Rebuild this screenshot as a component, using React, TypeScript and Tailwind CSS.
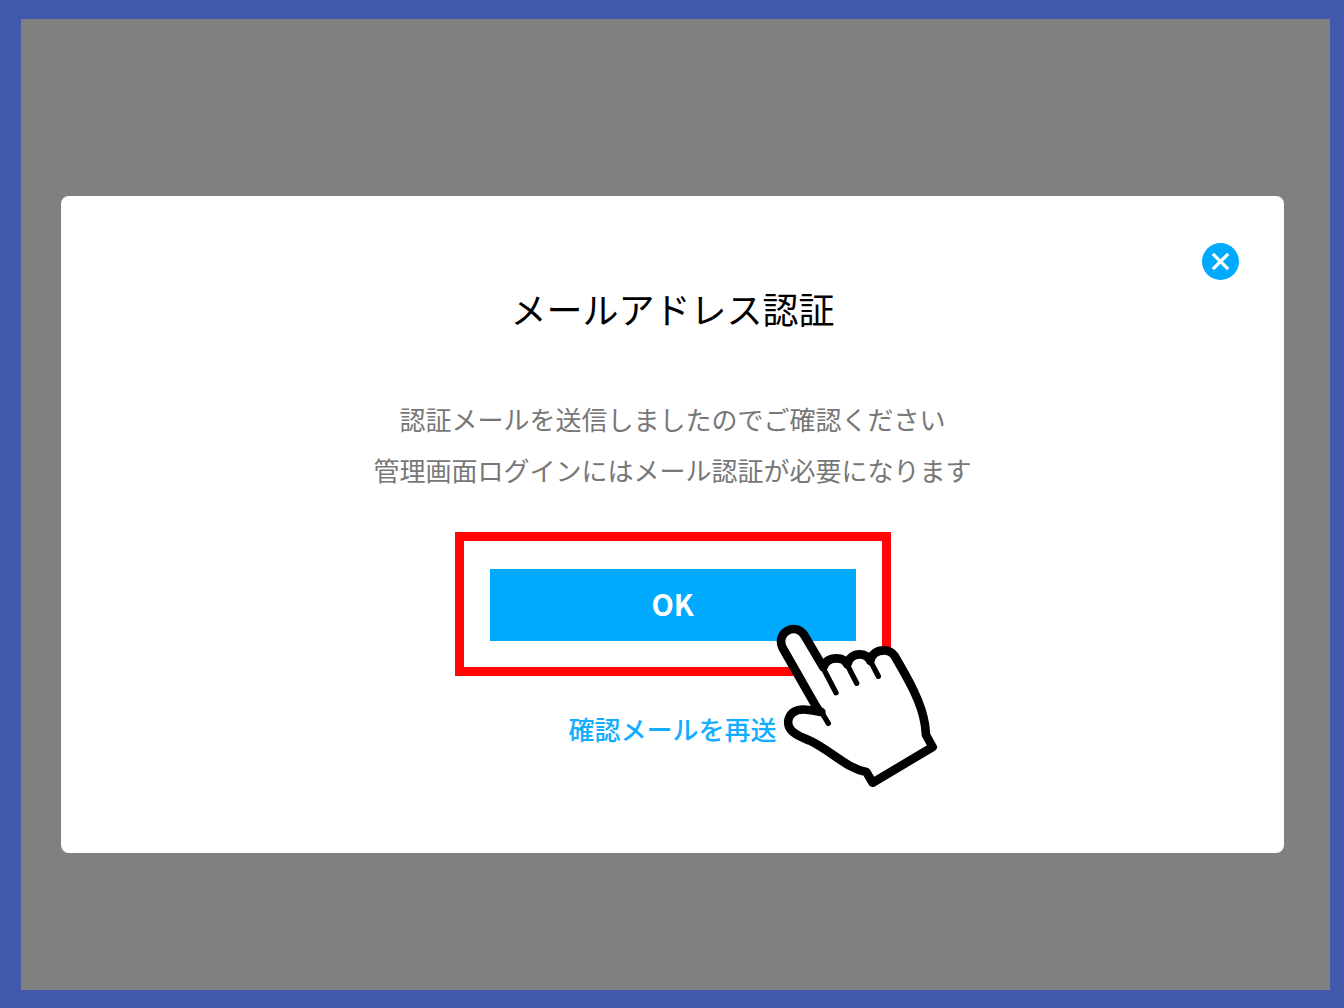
const HandPointer = () => (
  <svg
    viewBox="0 0 600 570"
    className="pointer-events-none absolute -right-[78px] top-[69px] h-[190px] w-[200px]"
    fill="none"
    stroke="#000"
    strokeLinecap="round"
    strokeLinejoin="round"
    aria-hidden="true"
  >
    {/* Outline of the hand */}
    <path
      d="M175 301 L68 114 C58 94 64 72 82 62 C100 52 122 57 134 77 L190 172 C196 153 210 145 230 145 C246 145 257 152 262 163 C266 143 281 133 299 133 C314 133 325 140 331 153 C335 131 351 121 372 121 C386 121 396 126 404 138 C445 208 485 277 495 345 L498 375 L518 411 L338 518 L319 486 C258 474 220 427 150 392 C122 380 106 376 93 360 C79 342 84 321 98 308 C120 292 148 300 184 306 Z"
      fill="#fff"
      strokeWidth="26"
    />
    {/* Finger creases */}
    <path d="M188 172 L228 248 M262 165 L290 220 M331 153 L355 199 M176 292 L205 340" strokeWidth="16" />
  </svg>
)

const CloseIcon = () => (
  <svg viewBox="0 0 37 37" className="h-full w-full" fill="none" aria-hidden="true">
    <circle cx="18.5" cy="18.5" r="18.5" fill="#00aaff" />
    <path d="M10.8 10.8 L26.2 26.2 M26.2 10.8 L10.8 26.2" stroke="#fff" strokeWidth="3.2" />
  </svg>
)

const messages = [
  '認証メールを送信しましたのでご確認ください',
  '管理画面ログインにはメール認証が必要になります',
]

const App = () => {
  return (
    <div className="flex min-h-screen bg-[#4259ab] pt-[19px] pr-[14px] pb-[18px] pl-[21px] font-['Noto_Sans_CJK_JP',sans-serif]">
      {/* Backdrop */}
      <div className="flex flex-1 items-center bg-[#808080] pt-10 pr-[46px] pl-10">
        <div
          role="dialog"
          aria-labelledby="dialog-title"
          className="flex w-full flex-col items-center rounded-lg bg-white px-[45px] pt-[47px] pb-[99px]"
        >
          <button type="button" aria-label="閉じる" className="h-[37px] w-[37px] cursor-pointer self-end rounded-full">
            <CloseIcon />
          </button>

          <h1 id="dialog-title" className="text-[36px] leading-[56px] text-black">
            メールアドレス認証
          </h1>

          <div className="mt-[57px] text-center text-[26px] leading-[51px] text-[#777777]">
            {messages.map((message) => (
              <p key={message}>{message}</p>
            ))}
          </div>

          {/* Highlighted action */}
          <div className="relative mt-[37px] border-[9px] border-[#ff0505] px-[26px] pt-7 pb-[26px]">
            <button
              type="button"
              className="block h-[72px] w-[366px] cursor-pointer bg-[#00aaff] pb-0.5 text-[29px] font-bold text-white"
            >
              OK
            </button>
            <HandPointer />
          </div>

          <a href="#resend" className="mt-7 text-[26px] leading-[50px] font-medium text-[#12adff]">
            確認メールを再送
          </a>
        </div>
      </div>
    </div>
  )
}

export default App
